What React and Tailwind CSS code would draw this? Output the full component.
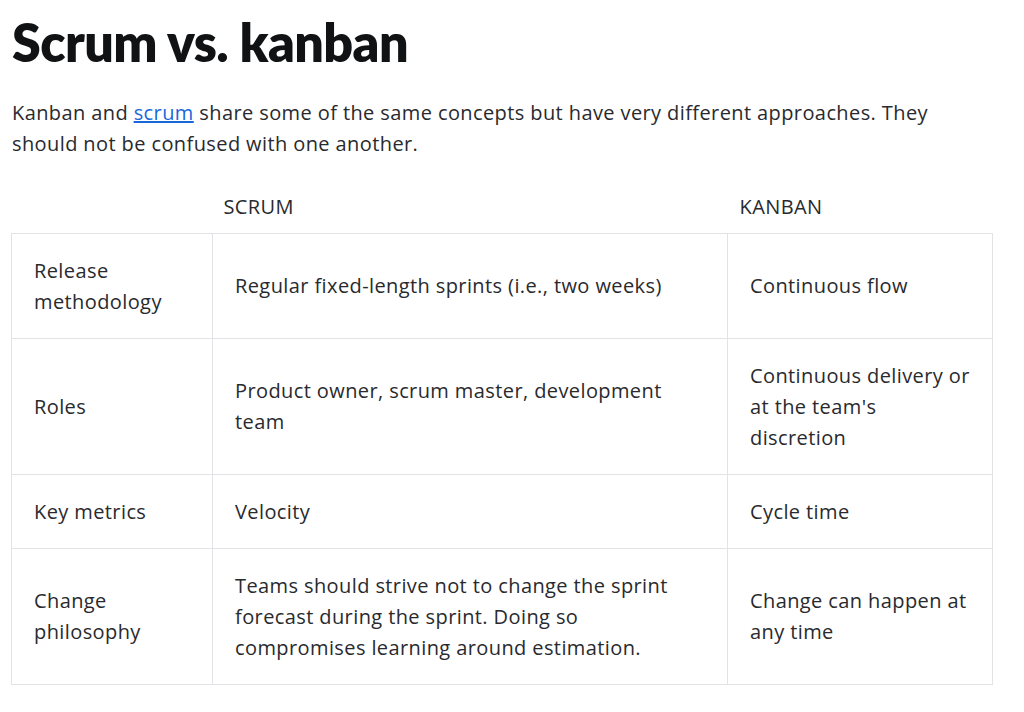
import React from "react";

const rows = [
  [["Release", "methodology"], ["Regular fixed-length sprints (i.e., two weeks)"], ["Continuous flow"]],
  [["Roles"], ["Product owner, scrum master, development", "team"], ["Continuous delivery or", "at the team's", "discretion"]],
  [["Key metrics"], ["Velocity"], ["Cycle time"]],
  [["Change", "philosophy"], ["Teams should strive not to change the sprint", "forecast during the sprint. Doing so", "compromises learning around estimation."], ["Change can happen at", "any time"]],
];

function Lines({ lines }) {
  return lines.map((l, i) => (
    <React.Fragment key={i}>
      {i > 0 && <br />}
      {l}
    </React.Fragment>
  ));
}

export default function App() {
  return (
    <div className="w-[1024px] h-[712px] bg-white overflow-hidden text-[#292a2e]" style={{ fontFamily: "'Open Sans', Lato, sans-serif" }}>
      <div className="pl-[12px] pr-[20px]">
        <h1 className="pt-[10px] text-[52px] leading-[64px] font-extrabold text-[#101214] tracking-[-0.6px]" style={{ fontFamily: "Lato, sans-serif" }}>Scrum vs. kanban</h1>
        <p className="mt-[23px] text-[20px] leading-[31px] tracking-[0.4px] whitespace-nowrap">
          Kanban and <a href="#" className="text-[#1868db] underline">scrum</a> share some of the same concepts but have very different approaches. They<br />
          should not be confused with one another.
        </p>
      </div>
      <table className="ml-[11px] mt-[18px] w-[981px] border-collapse text-[20px] leading-[31px] tracking-[0.4px] table-fixed">
        <colgroup>
          <col className="w-[201px]" />
          <col className="w-[515px]" />
          <col className="w-[265px]" />
        </colgroup>
        <thead>
          <tr className="h-[56px]">
            <th className="font-normal text-left"></th>
            <th className="font-medium text-left pl-[11px] pt-[4px]">SCRUM</th>
            <th className="font-medium text-left pl-[12px] pt-[4px]">KANBAN</th>
          </tr>
        </thead>
        <tbody>
          {rows.map((r, i) => (
            <tr key={i}>
              {r.map((c, j) => (
                <td key={j} className="border border-[#e2e3e6] px-[22px] py-[21px] align-middle whitespace-nowrap">
                  <Lines lines={c} />
                </td>
              ))}
            </tr>
          ))}
        </tbody>
      </table>
    </div>
  );
}
